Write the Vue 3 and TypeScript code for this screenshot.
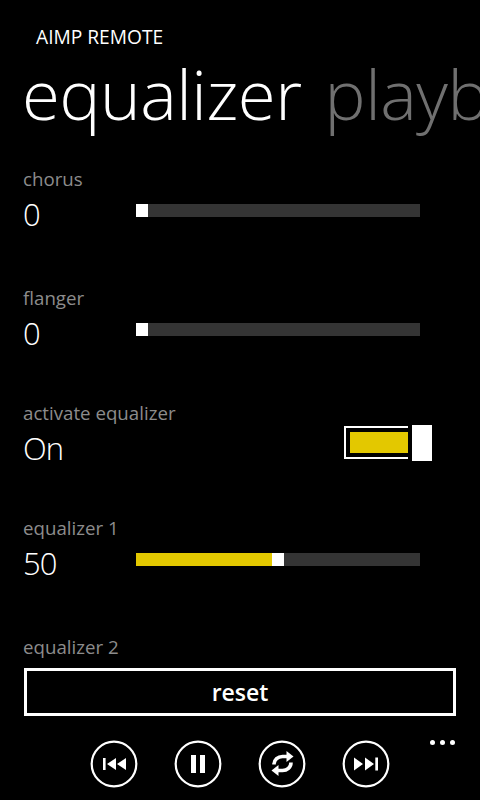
<script setup lang="ts">
interface Row { label: string; value: string; percent: number }
const top: Row[] = [
  { label: 'chorus', value: '0', percent: 0 },
  { label: 'flanger', value: '0', percent: 0 },
]
const thumb = 12
const track = 284
function fill(p: number): string {
  return `${Math.round((track - thumb) * p / 100)}px`
}
</script>

<template>
  <div class="phone">
    <header class="head">
      <div class="app-title">AIMP REMOTE</div>
      <div class="pivot">
        <span class="pivot-active">equalizer</span>
        <span class="pivot-next">playback</span>
      </div>
    </header>

    <main class="list">
      <section v-for="r in top" :key="r.label" class="row">
        <div class="label">{{ r.label }}</div>
        <div class="line">
          <div class="value">{{ r.value }}</div>
          <div class="track">
            <div class="fill" :style="{ width: fill(r.percent) }"></div>
            <div class="thumb"></div>
          </div>
        </div>
      </section>

      <section class="row">
        <div class="label">activate equalizer</div>
        <div class="line">
          <div class="value">On</div>
          <div class="switch">
            <div class="switch-box"><div class="switch-fill"></div></div>
            <div class="switch-thumb"></div>
          </div>
        </div>
      </section>

      <section class="row">
        <div class="label">equalizer 1</div>
        <div class="line">
          <div class="value">50</div>
          <div class="track">
            <div class="fill" :style="{ width: fill(50) }"></div>
            <div class="thumb"></div>
          </div>
        </div>
      </section>

      <section class="row">
        <div class="label">equalizer 2</div>
      </section>
    </main>

    <footer class="foot">
      <button class="reset">reset</button>
      <div class="bar">
        <div class="transport">
          <svg class="round" viewBox="0 0 48 48">
            <circle cx="24" cy="24" r="22.3" />
            <rect class="solid" x="13" y="18" width="2.6" height="12" />
            <path class="solid" d="M17 24l9-6v12zM27 24l9-6v12z" />
          </svg>
          <svg class="round" viewBox="0 0 48 48">
            <circle cx="24" cy="24" r="22.3" />
            <rect class="solid" x="17" y="15" width="5" height="18" />
            <rect class="solid" x="26" y="15" width="5" height="18" />
          </svg>
          <svg class="round" viewBox="0 0 48 48">
            <circle cx="24" cy="24" r="22.3" />
            <g>
              <path class="arc" d="M16 24.500C16 19.500 20 16.500 24.500 16.500H30" />
              <path class="solid" d="M28.500 11L35.500 16.500L28.500 22z" />
            </g>
            <g transform="rotate(180 24.500 23.500)">
              <path class="arc" d="M16 24.500C16 19.500 20 16.500 24.500 16.500H30" />
              <path class="solid" d="M28.500 11L35.500 16.500L28.500 22z" />
            </g>
          </svg>
          <svg class="round" viewBox="0 0 48 48">
            <circle cx="24" cy="24" r="22.3" />
            <path class="solid" d="M12 17.500l9 6.500-9 6.500zM23 17.500l9 6.500-9 6.500z" />
            <rect class="solid" x="33.300" y="17.500" width="2.700" height="13" />
          </svg>
        </div>
        <div class="dots"><i></i><i></i><i></i></div>
      </div>
    </footer>
  </div>
</template>

<style scoped>
.phone {
  width: 480px;
  height: 800px;
  background: #000;
  color: #fff;
  display: flex;
  flex-direction: column;
  overflow: hidden;
  font-family: "Open Sans", "Noto Sans", sans-serif;
}
.head {
  flex: none;
  height: 164px;
  overflow: hidden;
}
.app-title {
  padding: 25px 0 0 36px;
  font-size: 19.200px;
  line-height: 24px;
}
.pivot {
  display: flex;
  gap: 23px;
  padding: 2px 0 0 22px;
  white-space: nowrap;
  font-size: 69px;
  line-height: 84px;
  font-weight: 300;
  letter-spacing: -0.5px;
}
.pivot-next {
  color: #707070;
}
.list {
  flex: 1;
  min-height: 0;
  overflow: hidden;
  padding-left: 23px;
}
.row {
  height: 115px;
}
.row:nth-child(1),
.row:nth-child(4) {
  height: 119px;
}
.label {
  font-size: 18.700px;
  line-height: 30px;
  color: #8c8c8c;
}
.line {
  display: flex;
  align-items: center;
  height: 40px;
}
.value {
  width: 113px;
  margin-top: 0;
  font-size: 31px;
  line-height: 40px;
  font-weight: 300;
  letter-spacing: -1px;
}
.track {
  width: 284px;
  height: 13px;
  margin-top: -8px;
  background: #343434;
  display: flex;
}
.fill {
  background: #e3c800;
}
.thumb {
  width: 12px;
  background: #fff;
}
.switch {
  display: flex;
  align-items: center;
  margin-left: 208px;
  margin-top: -11px;
}
.switch-box {
  width: 64px;
  height: 33px;
  box-sizing: border-box;
  border: 2px solid #fff;
  border-right: none;
  padding: 4px 0 4px 4px;
}
.switch-fill {
  height: 100%;
  background: #e3c800;
}
.switch-thumb {
  width: 20px;
  height: 36px;
  margin-left: 4px;
  background: #fff;
}
.foot {
  flex: none;
  height: 132px;
}
.reset {
  display: block;
  width: 432px;
  height: 48px;
  margin: 0 0 0 24px;
  box-sizing: border-box;
  background: #000;
  border: 3px solid #fff;
  color: #fff;
  font-family: inherit;
  font-size: 23px;
  font-weight: 600;
  line-height: 36px;
  padding: 0;
}
.bar {
  position: relative;
  height: 84px;
}
.transport {
  display: flex;
  gap: 36px;
  padding: 24px 0 0 90px;
}
.round {
  width: 48px;
  height: 48px;
  display: block;
}
.round circle {
  fill: none;
  stroke: #fff;
  stroke-width: 2.200;
}
.solid {
  fill: #fff;
}
.arc {
  fill: none;
  stroke: #fff;
  stroke-width: 3.600;
}
.dots {
  position: absolute;
  right: 25px;
  top: 24px;
  display: flex;
  gap: 5px;
}
.dots i {
  display: block;
  width: 5px;
  height: 5px;
  border-radius: 50%;
  background: #fff;
}
</style>

<style>
html, body { background: #000; }
</style>
